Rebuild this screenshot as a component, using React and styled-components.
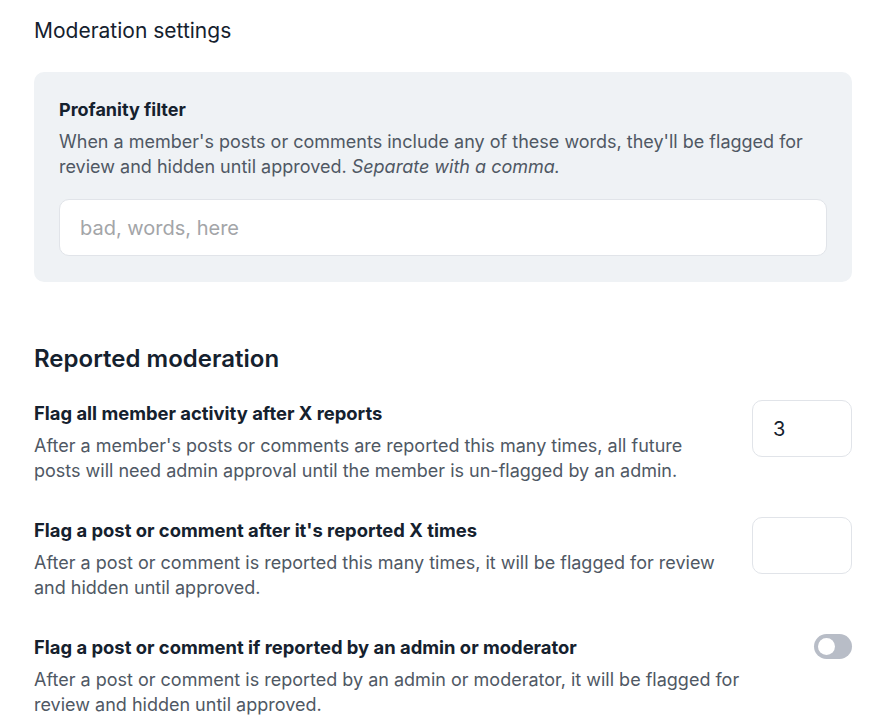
import React from "react";
import styled, { createGlobalStyle } from "styled-components";

const GlobalStyle = createGlobalStyle`
  * { box-sizing: border-box; }
  body {
    margin: 0;
    background: #ffffff;
    font-family: Inter, "Noto Sans", "Liberation Sans", sans-serif;
    -webkit-font-smoothing: antialiased;
  }
`;

const Page = styled.div`
  padding: 17px 30px 0 34px;
  width: 882px;
`;

const PageTitle = styled.h1`
  margin: 0 0 27px 0;
  font-size: 21px;
  line-height: 28px;
  font-weight: 400;
  color: #15212e;
`;

const Card = styled.section`
  background: #eff2f5;
  border-radius: 10px;
  padding: 26px 25px 26px 25px;
`;

const CardTitle = styled.h3`
  margin: 0 0 7px 0;
  font-size: 18px;
  line-height: 24px;
  font-weight: 700;
  color: #15212e;
`;

const Description = styled.p`
  margin: 0;
  font-size: 18px;
  line-height: 25px;
  color: #4f5864;
  em { font-style: italic; }
`;

const WordsInput = styled.input`
  display: block;
  width: 100%;
  height: 57px;
  margin-top: 20px;
  padding: 0 20px;
  border: 1px solid #e1e4e9;
  border-radius: 10px;
  background: #ffffff;
  font-family: inherit;
  font-size: 20px;
  color: #15212e;
  outline: none;
  &::placeholder { color: #a3a5a8; }
`;

const SectionTitle = styled.h2`
  margin: 61px 0 25px 0;
  font-size: 24px;
  line-height: 32px;
  font-weight: 600;
  color: #15212e;
`;

const Rows = styled.div`
  display: flex;
  flex-direction: column;
  gap: 34px;
`;

const Row = styled.div`
  display: flex;
  align-items: flex-start;
  gap: 24px;
`;

const RowText = styled.div`
  flex: 1;
  min-width: 0;
`;

const RowTitle = styled.h4`
  margin: 1px 0 8px 0;
  font-size: 18.4px;
  line-height: 24px;
  font-weight: 700;
  color: #15212e;
`;

const NumberBox = styled.input`
  flex: none;
  width: 100px;
  height: 57px;
  padding: 0 20px;
  border: 1px solid #e1e4e9;
  border-radius: 10px;
  background: #ffffff;
  font-family: inherit;
  font-size: 20px;
  color: #15212e;
  outline: none;
`;

const Toggle = styled.button`
  flex: none;
  position: relative;
  width: 38px;
  height: 25px;
  padding: 0;
  border: none;
  border-radius: 13px;
  background: ${p => (p.$on ? "#30cf43" : "#b8bdc7")};
  cursor: pointer;
  &::after {
    content: "";
    position: absolute;
    top: 4px;
    left: ${p => (p.$on ? "18px" : "4px")};
    width: 17px;
    height: 17px;
    border-radius: 50%;
    background: #ffffff;
  }
`;

const rows = [
  {
    title: "Flag all member activity after X reports",
    text: "After a member's posts or comments are reported this many times, all future posts will need admin approval until the member is un-flagged by an admin.",
    kind: "number",
    value: "3",
  },
  {
    title: "Flag a post or comment after it's reported X times",
    text: "After a post or comment is reported this many times, it will be flagged for review and hidden until approved.",
    kind: "number",
    value: "",
  },
  {
    title: "Flag a post or comment if reported by an admin or moderator",
    text: "After a post or comment is reported by an admin or moderator, it will be flagged for review and hidden until approved.",
    kind: "toggle",
  },
];

export default function App() {
  return (
    <>
      <GlobalStyle />
      <Page>
        <PageTitle>Moderation settings</PageTitle>
        <Card>
          <CardTitle>Profanity filter</CardTitle>
          <Description>
            When a member's posts or comments include any of these words, they'll be flagged for
            review and hidden until approved. <em>Separate with a comma.</em>
          </Description>
          <WordsInput placeholder="bad, words, here" />
        </Card>

        <SectionTitle>Reported moderation</SectionTitle>
        <Rows>
          {rows.map(r => (
            <Row key={r.title}>
              <RowText>
                <RowTitle>{r.title}</RowTitle>
                <Description>{r.text}</Description>
              </RowText>
              {r.kind === "number" ? (
                <NumberBox defaultValue={r.value} />
              ) : (
                <Toggle $on={false} aria-label="toggle" />
              )}
            </Row>
          ))}
        </Rows>
      </Page>
    </>
  );
}
